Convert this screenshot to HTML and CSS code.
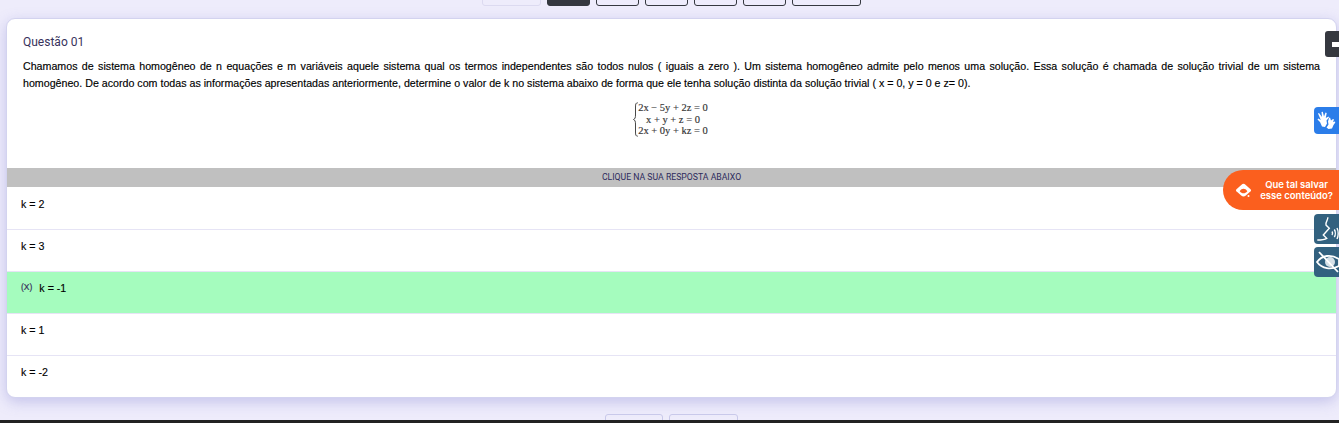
FILE: index.html
```html
<!DOCTYPE html>
<html lang="pt-BR">
<head>
    <meta charset="UTF-8">
    <meta name="viewport" content="width=device-width, initial-scale=1.0">
    <title>Questão 01</title>
    <link rel="stylesheet" href="styles.css">
</head>
<body>
    <div class="page">
        <div class="pager pager-top">
            <span class="page-btn btn-light btn-first"></span>
            <span class="page-btn btn-dark"></span>
            <span class="page-btn"></span>
            <span class="page-btn"></span>
            <span class="page-btn"></span>
            <span class="page-btn"></span>
            <span class="page-btn btn-wide"></span>
        </div>

        <div class="card">
            <div class="question">
                <h2 class="question-title">Questão 01</h2>
                <p class="question-text">Chamamos de sistema homogêneo de n equações e m variáveis aquele sistema qual os termos independentes são todos nulos ( iguais a zero ). Um sistema homogêneo admite pelo menos uma solução. Essa solução é chamada de solução trivial de um sistema homogêneo. De acordo com todas as informações apresentadas anteriormente, determine o valor de k no sistema abaixo de forma que ele tenha solução distinta da solução trivial ( x = 0, y = 0 e z= 0).</p>
                <div class="equation">
                    <svg class="brace" width="5" height="35" viewBox="0 0 5 35">
                        <path d="M4.800 .8C2.800 .8 2.500 2 2.500 5V13C2.500 15.500 2 17 .5 17.500C2 18 2.500 19.500 2.500 22V30C2.500 33 2.800 34.200 4.800 34.200" fill="none" stroke="#333" stroke-width=".9"/>
                    </svg>
                    <div class="eq-lines">
                        <span>2x − 5y + 2z = 0</span>
                        <span>x + y + z = 0</span>
                        <span>2x + 0y + kz = 0</span>
                    </div>
                </div>
            </div>

            <div class="answers-head">CLIQUE NA SUA RESPOSTA ABAIXO</div>
            <div class="answer">k = 2</div>
            <div class="answer">k = 3</div>
            <div class="answer answer-right"><small class="mark">(X)</small>k = -1</div>
            <div class="answer">k = 1</div>
            <div class="answer answer-last">k = -2</div>
        </div>

        <div class="pager pager-bottom">
            <span class="page-btn btn-soft"></span>
            <span class="page-btn btn-soft btn-next"></span>
        </div>
    </div>
    <div class="footer-bar"></div>

    <div class="tab-dark"><span></span></div>

    <div class="side-btn side-libras">
        <svg width="19" height="19" viewBox="0 0 19 19" fill="#fff">
            <path d="M1 2.500L2 2 5 6 4.500 1 5.800 .8 7 5.500 8.500 1.500 9.700 2 8.800 7 11.500 5.500 12 6.500 9.500 9.500 10 12.500 8 16 5 15.500 3 11 .5 8.500 1.300 7.500 3.800 9z"/>
            <path d="M13 6.500L14 9.500 16 8 17 8.500 16 11 18 10.500 18.300 11.500 16.500 14 15 17.500 11.500 18 9.500 16.500 11.500 13.500 11 10.500 12 7z"/>
        </svg>
    </div>

    <div class="save-pill">
        <svg width="17" height="15" viewBox="0 0 17 15">
            <path d="M8.500 .8C9.200 .8 9.800 1.200 10.500 1.800L15.500 6.300C16.200 7 16.200 7.700 15.600 8.300L10.800 12.500C9.300 13.800 7.700 13.800 6.200 12.500L1.400 8.300C.8 7.700 .8 7 1.500 6.300L6.500 1.800C7.200 1.200 7.800 .8 8.500 .8z" fill="#fff"/>
            <path d="M4.700 8.300C6 6.500 7 5.800 8.500 5.800S11 6.500 12.300 8.300C11 9.800 10 10.300 8.500 10.300S6 9.800 4.700 8.300z" fill="#fb5f1e"/>
            <circle cx="13.500" cy="13" r="1" fill="#fff"/>
        </svg>
        <span class="save-text">Que tal salvar<br>esse conteúdo?</span>
    </div>

    <div class="side-btn side-voice">
        <svg width="25" height="30" viewBox="0 0 25 30" fill="none" stroke="#fff" stroke-width="1.400">
            <path d="M13.700 3.300C14.500 6 11 8 12 11L15.300 14.300L9.300 21L12.700 24.300C10 26 7 26 3.300 26"/>
            <path d="M18 17.500C18.700 18.500 18.700 20 18 21M20.300 15.500C21.600 17.500 21.600 21 20.300 23M23 14C24.600 17 24.600 22 23 25"/>
        </svg>
    </div>

    <div class="side-btn side-eye">
        <svg width="25" height="30" viewBox="0 0 25 30" fill="none" stroke="#fff" stroke-width="1.800">
            <path d="M3 15C8 8 17 7 25 12V19C17 23 8 22 3 15z"/>
            <circle cx="16" cy="15" r="5" fill="#d6e1e8" stroke="none"/>
            <path d="M5 5L24 25"/>
        </svg>
    </div>
</body>
</html>
```

FILE: styles.css
```css
html, body {
    margin: 0;
    padding: 0;
    height: 423px;
    overflow: hidden;
}

body {
    position: relative;
    background: #eeecfb;
    font-family: "Liberation Sans", Arial, sans-serif;
}

.page {
    padding: 0 2px 0 6px;
    height: 420px;
    overflow: hidden;
}

/* buttons above and below the card, cut by the window */
.pager {
    display: flex;
    justify-content: center;
    gap: 6px;
}

.pager-top {
    height: 6px;
    margin-bottom: 12px;
    align-items: flex-end;
}

.pager-bottom {
    height: 6px;
    margin-top: 16px;
    align-items: flex-start;
}

.page-btn {
    display: block;
    box-sizing: border-box;
    width: 43px;
    height: 30px;
    flex: none;
    border: 1px solid #35383f;
    border-radius: 3px;
}

.btn-first {
    width: 59px;
}

.btn-light {
    border-color: #dcdaf0;
}

.btn-dark {
    background: #35383f;
}

.btn-wide {
    width: 69px;
}

.btn-soft {
    width: 58px;
    border-color: #c9c9ea;
}

.btn-next {
    width: 69px;
}

.card {
    background: #fff;
    border: 1px solid #d3d3ef;
    border-radius: 9px;
    box-shadow: 0 4px 14px rgba(120, 120, 205, 0.35);
    overflow: hidden;
    height: 380px;
    box-sizing: border-box;
}

.question {
    padding: 15px 16px 0 16px;
    height: 149px;
    box-sizing: border-box;
}

.question-title {
    margin: 0;
    font-family: Roboto, sans-serif;
    font-weight: 400;
    font-size: 12px;
    line-height: 16px;
    color: #37325c;
}

.question-text {
    margin: 8px 0 0;
    font-size: 10.67px;
    line-height: 17px;
    color: #000;
    text-align: justify;
    -webkit-text-stroke: 0.15px #000;
}

.equation {
    display: flex;
    justify-content: center;
    align-items: center;
    margin-top: 10px;
    padding-right: 2px;
    gap: 0;
    color: #333;
}

.eq-lines {
    display: flex;
    flex-direction: column;
    align-items: center;
    font-family: "Liberation Serif", serif;
    font-size: 10.500px;
    line-height: 11.500px;
    -webkit-text-stroke: 0.15px #333;
}

.answers-head {
    height: 19px;
    background: #c0c0c0;
    font-family: Roboto, sans-serif;
    font-size: 8.700px;
    line-height: 19px;
    text-align: center;
    color: #2c2a5c;
}

.answer {
    box-sizing: border-box;
    height: 42px;
    padding: 0 14px;
    border-top: 1px solid #e6e4f5;
    font-size: 10.67px;
    line-height: 32px;
    color: #000;
    -webkit-text-stroke: 0.12px #000;
}

.answers-head + .answer {
    border-top-color: #fff;
}

.answer-right {
    background: #a5fcbe;
}

.mark {
    margin-right: 7px;
    font-size: 8.500px;
    position: relative;
    top: -2.500px;
    color: #37325c;
    -webkit-text-stroke: 0.2px #37325c;
}

.footer-bar {
    height: 3px;
    background: #222;
}

/* floating widgets at the right edge */
.tab-dark {
    position: absolute;
    top: 31px;
    right: 0;
    width: 14px;
    height: 26px;
    background: #35383f;
    border-radius: 3px 0 0 3px;
    display: flex;
    align-items: center;
    justify-content: flex-end;
}

.tab-dark span {
    display: block;
    width: 7px;
    height: 5px;
    background: #fff;
}

.side-btn {
    position: absolute;
    right: 0;
    width: 25px;
    display: flex;
    align-items: center;
    justify-content: center;
    border-radius: 4px 0 0 4px;
}

.side-libras {
    top: 107px;
    height: 27px;
    background: #2b7de9;
}

.side-voice {
    top: 214px;
    height: 30px;
    background: #32617f;
}

.side-eye {
    top: 247px;
    height: 30px;
    background: #32617f;
}

.save-pill {
    position: absolute;
    top: 170px;
    right: 0;
    width: 116px;
    height: 40px;
    box-sizing: border-box;
    padding-left: 12px;
    padding-right: 6px;
    display: flex;
    align-items: center;
    justify-content: space-between;
    background: #fb5f1e;
    border-radius: 20px 0 0 20px;
    color: #fff;
}

.save-text {
    font-family: Inter, sans-serif;
    font-weight: 600;
    font-size: 9.500px;
    line-height: 11px;
    text-align: center;
    white-space: nowrap;
}
```
